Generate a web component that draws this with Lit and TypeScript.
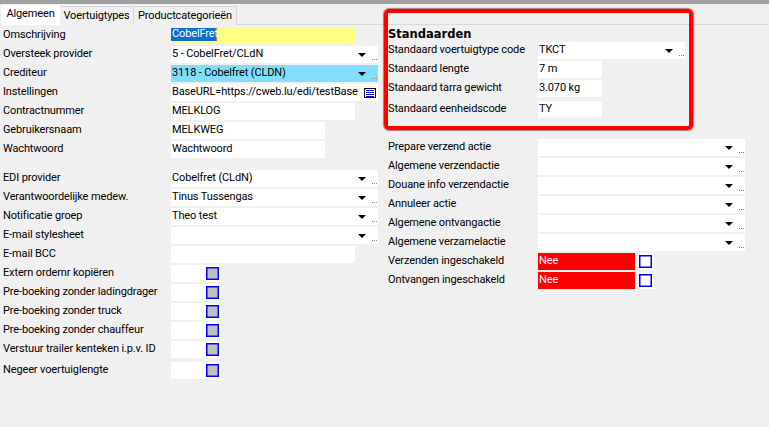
import { LitElement, html, css, svg } from "lit";
import { customElement } from "lit/decorators.js";

type Kind = "text" | "select" | "memo" | "check" | "flag";
interface Row {
  label: string;
  kind: Kind;
  value?: string;
  width?: number;
  tone?: string;
  gap?: number;
}

const left: Row[] = [
  { label: "Omschrijving", kind: "text", value: "CobelFret", width: 184, tone: "yellow" },
  { label: "Oversteek provider", kind: "select", value: "5 - CobelFret/CLdN", width: 207 },
  { label: "Crediteur", kind: "select", value: "3118 - Cobelfret (CLDN)", width: 207, tone: "blue" },
  { label: "Instellingen", kind: "memo", value: "BaseURL=https://cweb.lu/edi/testBase", width: 207 },
  { label: "Contractnummer", kind: "text", value: "MELKLOG", width: 184 },
  { label: "Gebruikersnaam", kind: "text", value: "MELKWEG", width: 154 },
  { label: "Wachtwoord", kind: "text", value: "Wachtwoord", width: 154 },
  { label: "EDI provider", kind: "select", value: "Cobelfret (CLdN)", width: 207, gap: 12 },
  { label: "Verantwoordelijke medew.", kind: "select", value: "Tinus Tussengas", width: 207 },
  { label: "Notificatie groep", kind: "select", value: "Theo test", width: 207 },
  { label: "E-mail stylesheet", kind: "select", value: "", width: 207 },
  { label: "E-mail BCC", kind: "text", value: "", width: 184 },
  { label: "Extern ordernr kopiëren", kind: "check" },
  { label: "Pre-boeking zonder ladingdrager", kind: "check" },
  { label: "Pre-boeking zonder truck", kind: "check" },
  { label: "Pre-boeking zonder chauffeur", kind: "check" },
  { label: "Verstuur trailer kenteken i.p.v. ID", kind: "check" },
  { label: "Negeer voertuiglengte", kind: "check", gap: 4 },
];

const standards: Row[] = [
  { label: "Standaard voertuigtype code", kind: "select", value: "TKCT", width: 147 },
  { label: "Standaard lengte", kind: "text", value: "7 m", width: 64 },
  { label: "Standaard tarra gewicht", kind: "text", value: "3.070 kg", width: 64 },
  { label: "Standaard eenheidscode", kind: "text", value: "TY", width: 64, gap: 4 },
];

const actions: Row[] = [
  { label: "Prepare verzend actie", kind: "select", value: "", width: 207 },
  { label: "Algemene verzendactie", kind: "select", value: "", width: 207 },
  { label: "Douane info verzendactie", kind: "select", value: "", width: 207 },
  { label: "Annuleer actie", kind: "select", value: "", width: 207 },
  { label: "Algemene ontvangactie", kind: "select", value: "", width: 207 },
  { label: "Algemene verzamelactie", kind: "select", value: "", width: 207 },
  { label: "Verzenden ingeschakeld", kind: "flag", value: "Nee" },
  { label: "Ontvangen ingeschakeld", kind: "flag", value: "Nee" },
];

@customElement("app-root")
export class AppRoot extends LitElement {
  static styles = css`
    :host {
      display: block;
      position: relative;
      width: 769px;
      height: 427px;
      overflow: hidden;
      background: #f0f0f0;
      color: #000;
      font-family: Roboto, "Liberation Sans", Arial, sans-serif;
      font-size: 11px;
      letter-spacing: -0.13px;
    }
    .topbar { height: 4px; background: #a0a0a0; }
    .tabs {
      display: grid;
      grid-template-columns: 59px 74px 103px;
      height: 21px;
      padding: 1px 0 0 1px;
      box-sizing: border-box;
      border-bottom: 1px solid #d9d9d9;
    }
    .tab {
      height: 19px;
      margin-top: 1px;
      box-sizing: border-box;
      border: 1px solid #d9d9d9;
      border-left-width: 0;
      border-bottom-width: 0;
      background: #f0f0f0;
      line-height: 17px;
      text-align: center;
      white-space: nowrap;
    }
    .tab.active {
      height: 20px;
      margin-top: 0;
      background: #fff;
      border: 0;
      line-height: 18px;
    }
    .columns {
      display: grid;
      grid-template-columns: 384px 1fr;
      padding-top: 2px;
    }
    .col-left { padding-left: 3px; }
    .col-right { padding-left: 4px; }
    .row {
      display: grid;
      grid-template-columns: 168px 1fr;
      height: 17px;
      margin-bottom: 2px;
      white-space: nowrap;
    }
    .col-right .row { grid-template-columns: 150px 1fr; }
    .label { line-height: 15px; }
    .field {
      position: relative;
      height: 17px;
      box-sizing: border-box;
      background: #fff;
      padding-left: 1px;
      line-height: 15px;
      overflow: hidden;
    }
    .yellow { background: #ffff80; padding-left: 0; }
    .blue { background: #80dfff; }
    .sel {
      display: block;
      width: 46px;
      height: 13px;
      margin-top: 1px;
      box-sizing: border-box;
      padding-left: 1px;
      line-height: 12px;
      background: #0b6fcf;
      color: #fff;
      border-right: 1px solid #e07020;
    }
    .value { display: block; width: 187px; overflow: hidden; }
    .caret {
      position: absolute;
      right: 12px;
      top: 7px;
      width: 0;
      height: 0;
      border-left: 4px solid transparent;
      border-right: 4px solid transparent;
      border-top: 4px solid #000;
    }
    .dots {
      position: absolute;
      right: 1px;
      bottom: 3px;
      width: 5px;
      height: 1px;
      background: repeating-linear-gradient(90deg, #808080 0 1px, transparent 1px 2px);
    }
    .memo-icon { position: absolute; right: 2px; top: 4px; display: block; }
    .check {
      width: 50px;
      background: #fff;
      padding: 2px 0 0 35px;
    }
    .flag-wrap { display: flex; }
    .flag {
      width: 97px;
      background: #f00;
      color: #fff;
      padding-left: 1px;
    }
    .flag-check { width: 19px; background: #fff; padding: 2px 0 0 4px; box-sizing: border-box; height: 17px; }
    .box {
      display: block;
      width: 13px;
      height: 13px;
      box-sizing: border-box;
      border: 1px solid #0000ff;
      background: #c0c0c0;
      box-shadow: inset 0 0 0 0.5px #0000ff;
    }
    .box.empty { background: #fff; }
    .group { padding-top: 1px; height: 112px; box-sizing: border-box; }
    .group-title {
      font-family: "DejaVu Sans", Verdana, sans-serif;
      font-weight: 700;
      font-size: 11.5px;
      letter-spacing: 0;
      line-height: 13px;
      height: 14px;
      color: #000;
    }
    .annotation {
      position: absolute;
      left: 384px;
      top: 9px;
      width: 309px;
      height: 121px;
      box-sizing: border-box;
      border: 4px solid #f00;
      border-radius: 5px;
      box-shadow: 0 0 1px 1px rgba(110, 30, 30, 0.55);
      pointer-events: none;
    }
  `;

  private memoIcon() {
    return html`<svg class="memo-icon" width="12" height="10" viewBox="0 0 12 10" aria-hidden="true">
      ${svg`<rect x="0.5" y="0.5" width="11" height="9" fill="#fff" stroke="#000"/>
      <path d="M2 2.5h8M2 4.5h8M2 6.5h8M2 8.5h8" stroke="#0000e0" fill="none"/>`}
    </svg>`;
  }

  private field(r: Row) {
    const w = r.width ? `width:${r.width}px` : "";
    const tone = r.tone ?? "";
    switch (r.kind) {
      case "select":
        return html`<div class="field ${tone}" style=${w}>${r.value}<span class="caret"></span><span class="dots"></span></div>`;
      case "memo":
        return html`<div class="field ${tone}" style=${w}><span class="value">${r.value}</span>${this.memoIcon()}</div>`;
      case "check":
        return html`<div class="field check"><span class="box"></span></div>`;
      case "flag":
        return html`<div class="flag-wrap"><div class="field flag">${r.value}</div><div class="flag-check"><span class="box empty"></span></div></div>`;
      default:
        if (r.tone === "yellow") {
          return html`<div class="field ${tone}" style=${w}><span class="sel">${r.value}</span></div>`;
        }
        return html`<div class="field ${tone}" style=${w}>${r.value}</div>`;
    }
  }

  private row(r: Row) {
    const s = r.gap ? `margin-top:${r.gap}px` : "";
    return html`<div class="row" style=${s}><div class="label">${r.label}</div>${this.field(r)}</div>`;
  }

  render() {
    return html`
      <div class="topbar"></div>
      <div class="tabs">
        <div class="tab active">Algemeen</div>
        <div class="tab">Voertuigtypes</div>
        <div class="tab">Productcategorieën</div>
      </div>
      <div class="columns">
        <div class="col-left">${left.map((r) => this.row(r))}</div>
        <div class="col-right">
          <div class="group">
            <div class="group-title">Standaarden</div>
            ${standards.map((r) => this.row(r))}
          </div>
          ${actions.map((r) => this.row(r))}
        </div>
      </div>
      <div class="annotation"></div>
    `;
  }
}
